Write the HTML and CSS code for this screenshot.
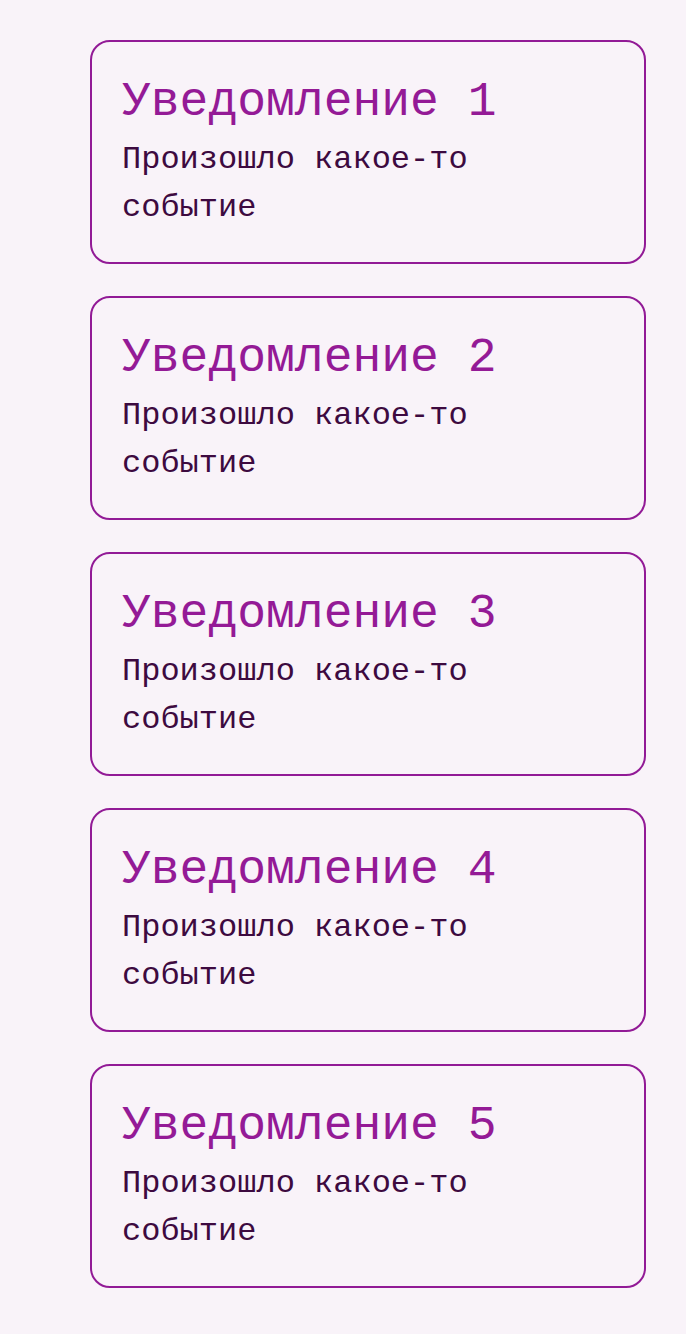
FILE: index.html
```html
<!DOCTYPE html>
<html lang="ru">
<head>
<meta charset="utf-8">
<link rel="stylesheet" href="styles.css">
</head>
<body>
<div class="list">
  <div class="card"><div class="title">Уведомление 1</div><div class="text">Произошло какое-то событие</div></div>
  <div class="card"><div class="title">Уведомление 2</div><div class="text">Произошло какое-то событие</div></div>
  <div class="card"><div class="title">Уведомление 3</div><div class="text">Произошло какое-то событие</div></div>
  <div class="card"><div class="title">Уведомление 4</div><div class="text">Произошло какое-то событие</div></div>
  <div class="card"><div class="title">Уведомление 5</div><div class="text">Произошло какое-то событие</div></div>
</div>
</body>
</html>
```
FILE: styles.css
```css
html, body {
  margin: 0;
  padding: 0;
  background: #f9f3f9;
}
body {
  font-family: "Liberation Mono", "DejaVu Sans Mono", monospace;
}
.list {
  display: flex;
  flex-direction: column;
  gap: 32px;
  padding: 40px 40px 40px 90px;
}
.card {
  border: 2px solid #921a96;
  border-radius: 20px;
  padding: 30px;
}
.title {
  font-size: 48px;
  line-height: 60px;
  color: #941a96;
  margin-bottom: 4px;
}
.text {
  font-size: 32px;
  line-height: 48px;
  color: #3d0a40;
}
```
